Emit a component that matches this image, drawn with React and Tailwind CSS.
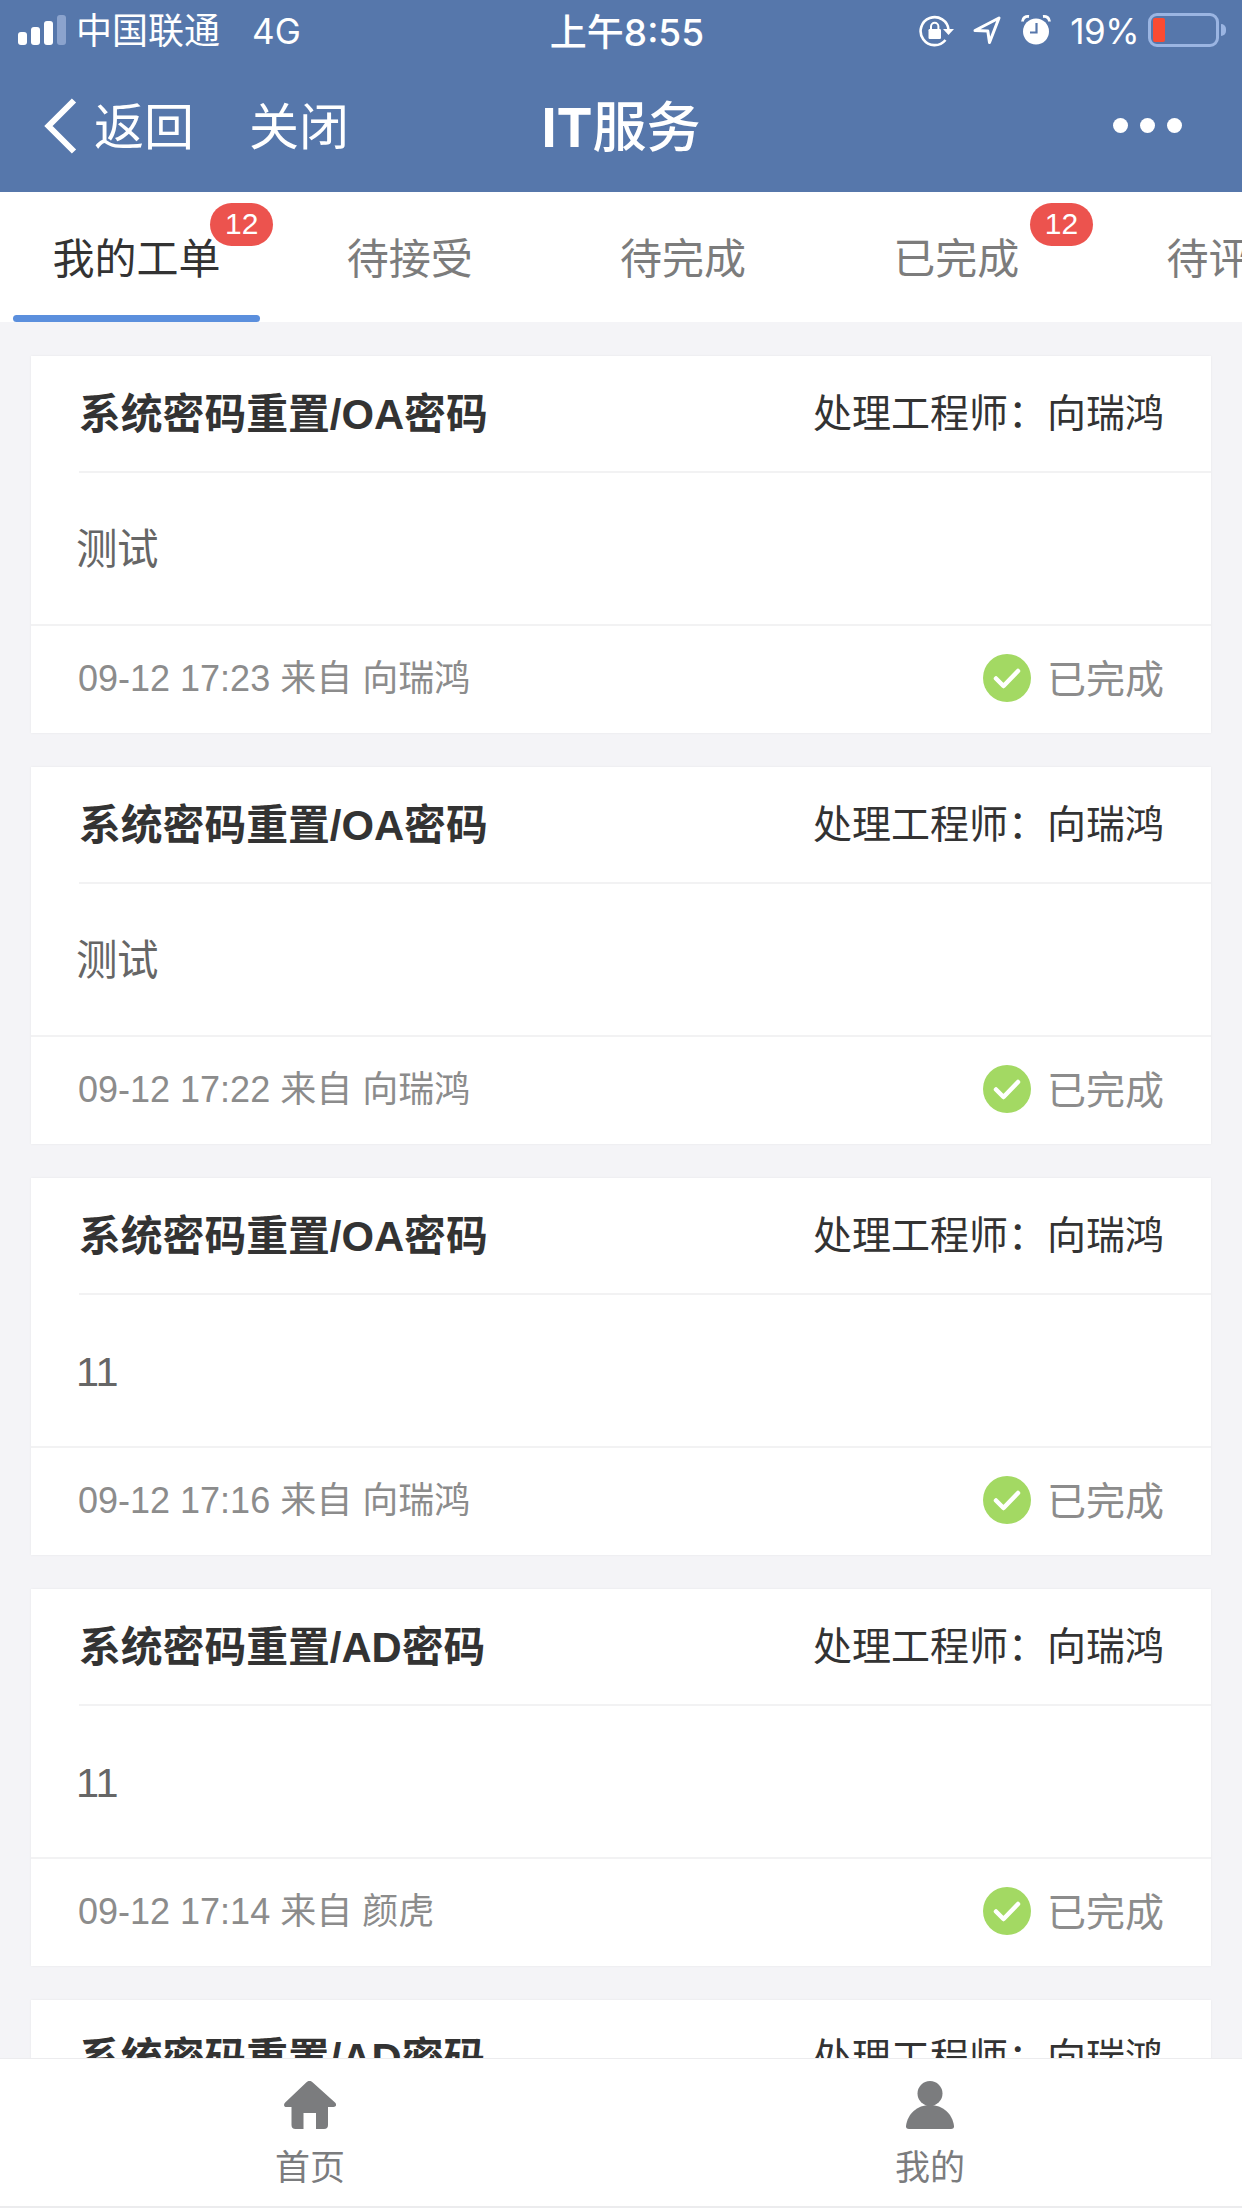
import React from "react";

const tabs = [
  { name: "我的工单", count: 12, active: true },
  { name: "待接受" },
  { name: "待完成" },
  { name: "已完成", count: 12 },
  { name: "待评价" },
];

const orders = [
  { id: 1, title: "系统密码重置/OA密码", engineer: "向瑞鸿", content: "测试", time: "09-12 17:23", from: "向瑞鸿" },
  { id: 2, title: "系统密码重置/OA密码", engineer: "向瑞鸿", content: "测试", time: "09-12 17:22", from: "向瑞鸿" },
  { id: 3, title: "系统密码重置/OA密码", engineer: "向瑞鸿", content: "11", time: "09-12 17:16", from: "向瑞鸿" },
  { id: 4, title: "系统密码重置/AD密码", engineer: "向瑞鸿", content: "11", time: "09-12 17:14", from: "颜虎" },
  { id: 5, title: "系统密码重置/AD密码", engineer: "向瑞鸿", content: "11", time: "09-12 17:12", from: "颜虎" },
];

const StatusBar = () => (
  <div className="relative flex h-[60px] items-center justify-between pl-[18px] pr-[16px] text-[36px] leading-none font-['Inter','Noto_Sans_CJK_SC',sans-serif]">
    <div className="flex items-center">
      <div className="flex h-[30px] items-end gap-[4px]">
        <div className="h-[13px] w-[9px] rounded-[3px] bg-white" />
        <div className="h-[18px] w-[9px] rounded-[3px] bg-white" />
        <div className="h-[24px] w-[9px] rounded-[3px] bg-white" />
        <div className="h-[30px] w-[9px] rounded-[3px] bg-[#8ba3cd]" />
      </div>
      <span className="pl-[10px] pt-[2px]">中国联通</span>
      <span className="pl-[32px] pt-[3px] text-[35px]">4G</span>
    </div>
    <div className="absolute inset-x-0 top-[14px] flex justify-center pl-[12px] text-[37px] font-medium">
      上午8:55
    </div>
    <div className="flex items-center">
      {/* Rotation lock */}
      <svg width="36" height="34" viewBox="0 0 36 34" fill="none">
        <path d="M26.5 27A14 14 0 1 1 29.6 17" stroke="#fff" strokeWidth="2.6" />
        <path d="M24 16h11l-5.5 6z" fill="#fff" />
        <rect x="9.5" y="16" width="12.5" height="10" rx="1.2" fill="#fff" />
        <path d="M12 17v-3.5a3.7 3.7 0 0 1 7.4 0V17" stroke="#fff" strokeWidth="2" />
      </svg>
      {/* Location */}
      <svg className="ml-[17px]" width="30" height="30" viewBox="0 0 30 30" fill="none">
        <path d="M3 15.5L27 3 17.5 27.5 15.8 16z" stroke="#fff" strokeWidth="3" strokeLinejoin="round" />
      </svg>
      {/* Alarm */}
      <svg className="ml-[19px]" width="30" height="32" viewBox="0 0 30 32" fill="none">
        <circle cx="15" cy="17.5" r="13" fill="#fff" />
        <path d="M1.5 7.5C1.5 4 4.5 2 8 2.5M28.5 7.5C28.5 4 25.5 2 22 2.5" stroke="#fff" strokeWidth="2.8" />
        <path d="M15.5 9v9.5H9" stroke="#5677ab" strokeWidth="2.2" />
      </svg>
      <span className="pl-[19px] pt-[3px] text-[35px] tracking-[-0.5px]">19%</span>
      <div className="ml-[9px] flex h-[34px] w-[71px] rounded-[9px] border-[3px] border-[#9bb5e2] p-[2px]">
        <div className="w-[12px] rounded-[2px] bg-[#fb4b32]" />
      </div>
      <div className="ml-[2px] h-[12px] w-[5px] rounded-r-full bg-[#9bb5e2]" />
    </div>
  </div>
);

const NavBar = () => (
  <div className="relative flex h-[132px] items-center justify-between pl-[43px] pr-[60px] text-[50px] leading-none">
    <div className="flex items-center">
      <svg width="34" height="56" viewBox="0 0 34 56" fill="none">
        <path d="M31 2.5L5.500 28 31 53.5" stroke="#fff" strokeWidth="6" />
      </svg>
      <span className="pl-[17px] pt-[3px]">返回</span>
      <span className="pl-[55px] pt-[3px]">关闭</span>
    </div>
    <div className="absolute inset-x-0 top-[41px] text-center text-[54px] font-medium">
      <span className="font-['Inter',sans-serif] font-bold">IT</span>服务
    </div>
    <div className="flex gap-[12px] pb-[2px]">
      <div className="size-[15px] rounded-full bg-white" />
      <div className="size-[15px] rounded-full bg-white" />
      <div className="size-[15px] rounded-full bg-white" />
    </div>
  </div>
);

const Tab = ({ tab }) => (
  <div
    className={`relative flex h-full w-[22%] shrink-0 items-center justify-center pt-[6px] ${
      tab.active ? "text-[#333]" : "text-[#7c7c7c]"
    }`}
  >
    {tab.name}
    {tab.count && (
      <div className="absolute right-0 top-[11px] flex h-[43px] w-[63px] items-center justify-center rounded-full bg-[#ec534e] pb-[2px] text-[30px] text-white">
        {tab.count}
      </div>
    )}
    {tab.active && <div className="absolute inset-x-[13px] bottom-0 h-[7px] rounded-full bg-[#5b8fdd]" />}
  </div>
);

const OrderCard = ({ order }) => (
  <div className="h-[377px] shrink-0 bg-white shadow-[0_0_2px_#e6e6ea]">
    <div className="ml-[48px] flex h-[117px] items-center justify-between border-b-2 border-[#f2f2f3] pr-[47px] text-[#333]">
      <div className="pt-[3px] text-[41.8px] font-bold">{order.title}</div>
      <div className="text-[39px]">处理工程师：{order.engineer}</div>
    </div>
    <div className="flex h-[153px] items-center border-b-2 border-[#f2f2f3] pl-[45px] pt-[3px] text-[41.5px] tracking-[-0.5px] text-[#666]">
      {order.content}
    </div>
    <div className="flex h-[107px] items-center justify-between pl-[47px] pr-[47px] text-[#8c8c8c]">
      <div className="pb-[2px] text-[36px]">
        {order.time} 来自 {order.from}
      </div>
      <div className="flex items-center text-[39px]">
        <svg className="mr-[16px] mb-[3px]" width="48" height="48" viewBox="0 0 48 48" fill="none">
          <circle cx="24" cy="24" r="24" fill="#a3d963" />
          <path d="M13 24.5L20.5 32 35 17" stroke="#fff" strokeWidth="4.5" strokeLinecap="round" strokeLinejoin="round" />
        </svg>
        已完成
      </div>
    </div>
  </div>
);

const TabBar = () => (
  <div className="flex h-[150px] shrink-0 border-b-2 border-t border-b-[#ececee] border-t-[#ececee] bg-white pr-[2px] text-[35px] text-[#7b7c7e]">
    <div className="flex flex-1 flex-col items-center pt-[22px]">
      <svg width="52" height="48" viewBox="0 0 52 48" fill="currentColor">
        <path d="M22.500 1.200a4.500 4.500 0 0 1 6 0L51 21.500c2 2 1.200 4.500-1.500 4.500H44v18a4 4 0 0 1-4 4h-8V32H19.500v16h-8a4 4 0 0 1-4-4V26h-5C-.2 26-.8 23.500 1.200 21.500z" />
      </svg>
      <div className="pt-[21px]">首页</div>
    </div>
    <div className="flex flex-1 flex-col items-center pt-[22px]">
      <svg width="48" height="48" viewBox="0 0 48 48" fill="currentColor">
        <circle cx="24" cy="12.5" r="12.5" />
        <path d="M0 45C1.5 33 11 24 24 24s22.500 9 24 21c.2 2-1 3-3 3H3c-2 0-3.200-1-3-3z" />
      </svg>
      <div className="pt-[21px]">我的</div>
    </div>
  </div>
);

const App = () => {
  return (
    <div className="flex h-[2208px] w-[1242px] flex-col overflow-hidden bg-[#f4f4f7] leading-none whitespace-nowrap font-['Liberation_Sans','Noto_Sans_CJK_SC',sans-serif]">
      <div className="h-[192px] shrink-0 bg-[#5677ab] text-white">
        <StatusBar />
        <NavBar />
      </div>
      <div className="flex h-[130px] shrink-0 overflow-hidden bg-white text-[42px]">
        {tabs.map((tab) => (
          <Tab key={tab.name} tab={tab} />
        ))}
      </div>
      <div className="flex min-h-0 flex-1 flex-col gap-[34px] overflow-hidden px-[31px] pt-[34px]">
        {orders.map((order) => (
          <OrderCard key={order.id} order={order} />
        ))}
      </div>
      <TabBar />
    </div>
  );
};

export default App;
